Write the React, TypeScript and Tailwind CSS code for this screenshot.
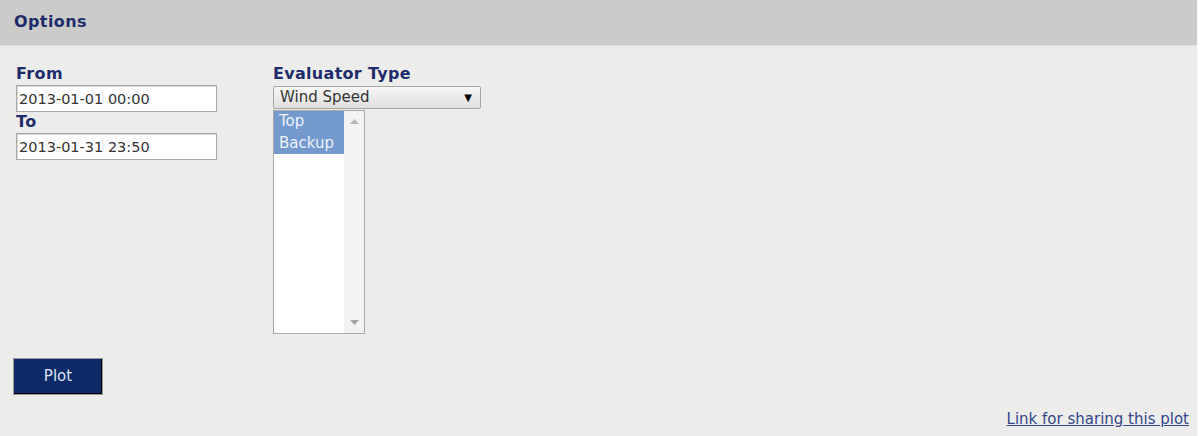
export default function App() {
  const font = { fontFamily: '"DejaVu Sans", Verdana, sans-serif' };
  return (
    <div
      className="w-[1198px] h-[436px] bg-[#ecedea] border-r border-[#f8f8f6] flex flex-col text-[#222]"
      style={font}
    >
      <div className="h-[46px] shrink-0 bg-[#cbccc9] border-b border-[#e2e3e0] flex items-center px-[14px]">
        <h2 className="text-[16px] font-bold tracking-[0.4px] text-[#1f2c6b] leading-none -mt-[1px]">Options</h2>
      </div>

      <div className="flex-1 flex flex-col pl-[13px] pt-[18px]">
        <div className="flex">
          <div className="w-[260px] pl-[3px] flex flex-col">
            <label className="text-[16px] font-bold tracking-[0.4px] leading-[19px] text-[#1f2c6b]">From</label>
            <input
              readOnly
              value="2013-01-01 00:00"
              className="mt-[2px] w-[201px] h-[27px] bg-white border border-[#a9aaa7] shadow-[inset_1px_1px_0_#d8d8d8] px-[2px] text-[14.5px] text-[#333] outline-none"
            />
            <label className="text-[16px] font-bold tracking-[0.4px] leading-[19px] text-[#1f2c6b]">To</label>
            <input
              readOnly
              value="2013-01-31 23:50"
              className="mt-[2px] w-[201px] h-[27px] bg-white border border-[#a9aaa7] shadow-[inset_1px_1px_0_#d8d8d8] px-[2px] text-[14.5px] text-[#333] outline-none"
            />
          </div>

          <div className="flex flex-col">
            <label className="text-[16px] font-bold tracking-[0.3px] leading-[19px] text-[#1f2c6b]">Evaluator Type</label>
            <div className="mt-[3px] w-[208px] h-[23px] flex items-center justify-between pl-[6px] pr-[8px] rounded-[2px] border border-[#a6a7a4] bg-gradient-to-b from-[#f7f7f5] to-[#dfe0dd] text-[15px] text-[#333]">
              <span>Wind Speed</span>
              <span className="text-[10px] text-black">▼</span>
            </div>
            <div className="mt-[1px] w-[92px] h-[224px] border border-[#a9aaa7] bg-white flex">
              <div className="flex-1 flex flex-col text-[15px] leading-[21.5px]">
                <div className="bg-[#7399cd] text-[#eef2fa] px-[5px]">Top</div>
                <div className="bg-[#7399cd] text-[#eef2fa] px-[5px]">Backup</div>
              </div>
              <div className="w-[20px] bg-[#f3f3f1] flex flex-col items-center justify-between py-[8px]">
                <svg width="9" height="5" viewBox="0 0 9 5">
                  <path d="M0 5 L4.5 0 L9 5 Z" fill="#b5b5b3" />
                </svg>
                <svg width="9" height="5" viewBox="0 0 9 5">
                  <path d="M0 0 L4.5 5 L9 0 Z" fill="#a3a3a1" />
                </svg>
              </div>
            </div>
          </div>
        </div>

        <button className="mt-[24px] w-[90px] h-[37px] bg-[#0e2a68] border border-[#9a9b98] shadow-[inset_-1px_-1px_0_#000] text-[#dde2ee] text-[15px] cursor-pointer">
          Plot
        </button>

        <div className="flex-1" />
        <div className="flex justify-end pr-[8px] pb-[8px]">
          <a href="#" className="text-[15px] text-[#34468a] underline leading-[18px]">
            Link for sharing this plot
          </a>
        </div>
      </div>
    </div>
  );
}
